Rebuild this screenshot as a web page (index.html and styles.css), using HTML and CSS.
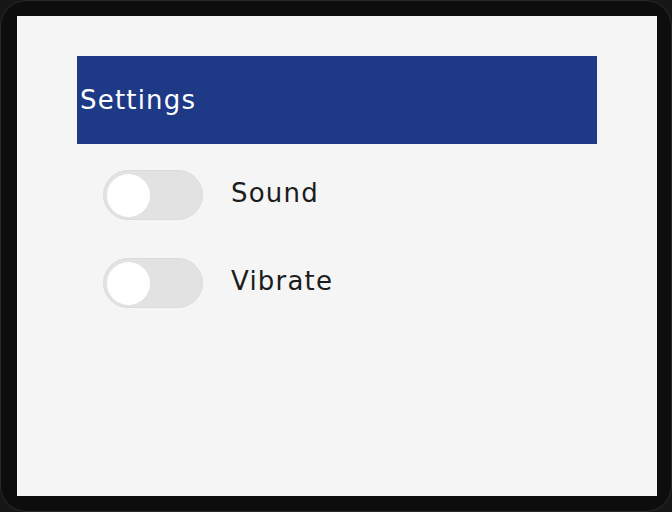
FILE: index.html
```html
<html>
  <head>
    <meta charset="utf-8">
    <link rel="stylesheet" href="styles.css">
  </head>
  <body>
    <div class="device">
      <div class="screen">
        <section class="settings">
          <header class="settings-title">Settings</header>
          <div class="option">
            <span class="switch"><span class="knob"></span></span>
            <span class="label">Sound</span>
          </div>
          <div class="option">
            <span class="switch"><span class="knob"></span></span>
            <span class="label">Vibrate</span>
          </div>
        </section>
      </div>
    </div>
  </body>
</html>
```

FILE: styles.css
```css
body {
  margin: 0;
  background: #161616;
  font-family: "DejaVu Sans", sans-serif;
}

.device {
  width: 672px;
  height: 512px;
  box-sizing: border-box;
  padding: 16px 15px 16px 17px;
  background: #0d0d0d;
  border-radius: 26px;
  box-shadow: inset 0 0 0 1px #2a2a2a;
}

.screen {
  width: 640px;
  height: 480px;
  background: #f5f5f5;
  padding: 40px 0 0 60px;
  box-sizing: border-box;
}

.settings {
  width: 520px;
}

.settings-title {
  display: flex;
  align-items: center;
  height: 88px;
  padding-left: 3px;
  background: #1e3a87;
  color: #ffffff;
  font-size: 26px;
  letter-spacing: 1.2px;
}

.option {
  display: flex;
  align-items: center;
  gap: 28px;
  padding-left: 26px;
  margin-top: 26px;
}

.option + .option {
  margin-top: 38px;
}

.switch {
  display: flex;
  align-items: center;
  width: 100px;
  height: 50px;
  box-sizing: border-box;
  padding: 0 3px;
  border: 1px solid #dcdcdc;
  border-radius: 25px;
  background: #e2e2e2;
}

.knob {
  width: 43px;
  height: 43px;
  border-radius: 50%;
  background: #ffffff;
}

.label {
  margin-bottom: 4px;
  font-size: 26px;
  letter-spacing: 1.2px;
  color: #1c1c1c;
}
```
